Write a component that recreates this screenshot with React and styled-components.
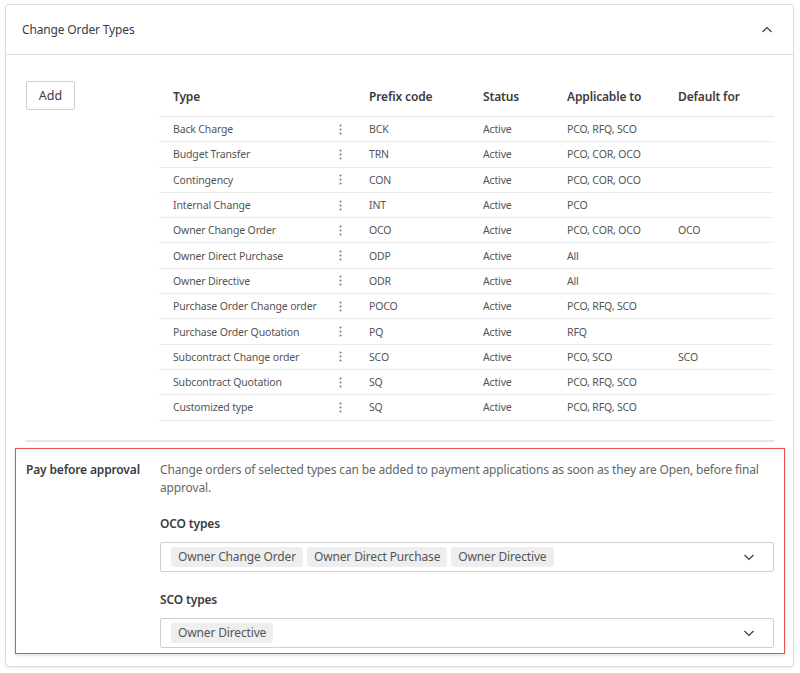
import styled, { createGlobalStyle } from "styled-components";

const GlobalStyle = createGlobalStyle`
  html, body {
    margin: 0;
    padding: 0;
    background: #ffffff;
    font-family: "Noto Sans", "Open Sans", Arial, sans-serif;
    color: #3c3c3c;
    letter-spacing: -0.15px;
  }
`;

const Page = styled.div`
  padding: 4px 6px 6px 5px;
`;

const Card = styled.div`
  width: 787px;
  height: 661px;
  border: 1px solid #dcdcdc;
  border-radius: 4px;
  box-shadow: 0 1px 2px rgba(0, 0, 0, 0.08);
  background: #fff;
  display: flex;
  flex-direction: column;
`;

const CardHeader = styled.div`
  height: 49px;
  border-bottom: 1px solid #dcdcdc;
  display: flex;
  align-items: center;
  justify-content: space-between;
  padding: 0 20px 0 16px;
  font-size: 12px;
  color: #3c3c3c;
`;

const CardBody = styled.div`
  padding: 22px 19px 0 9px;
  display: flex;
  flex-direction: column;
`;

const TopArea = styled.div`
  display: flex;
  padding-left: 11px;
`;

const AddColumn = styled.div`
  width: 135px;
  padding-top: 4px;
`;

const AddButton = styled.button`
  width: 49px;
  height: 29px;
  border: 1px solid #cfcfcf;
  border-radius: 2px;
  background: #fff;
  font-family: inherit;
  font-size: 12.5px;
  color: #3c3c3c;
  padding: 0;
`;

const Table = styled.div`
  width: 615px;
  display: grid;
  grid-template-columns: 167px 29px 114px 84px 111px 110px;
`;

const HeadCell = styled.div`
  height: 39px;
  border-bottom: 1px solid #e4e4e4;
  display: flex;
  align-items: center;
  padding-left: ${(p) => (p.$pad ? "14px" : "0")};
  font-size: 12px;
  font-weight: 600;
  color: #3c3c3c;
`;

const Cell = styled.div`
  height: 24.3px;
  border-bottom: 1px solid #ececec;
  display: flex;
  align-items: center;
  justify-content: ${(p) => (p.$center ? "center" : "flex-start")};
  padding-left: ${(p) => (p.$center ? "0" : "14px")};
  font-size: 10.5px;
  color: #555;
  white-space: nowrap;
`;

const Divider = styled.div`
  margin: 19px 0 0 10px;
  height: 2px;
  background: #e6e6e6;
`;

const Highlight = styled.div`
  margin-top: 6px;
  width: 770px;
  height: 206px;
  border: 1px solid #e8524f;
  box-shadow: 0 1px 3px rgba(0, 0, 0, 0.15);
  display: flex;
  padding: 12px 0 0 10px;
  box-sizing: border-box;
`;

const SettingLabel = styled.div`
  width: 134px;
  flex-shrink: 0;
  font-size: 12px;
  font-weight: 600;
  color: #3c3c3c;
  line-height: 18px;
`;

const SettingContent = styled.div`
  width: 614px;
  display: flex;
  flex-direction: column;
`;

const Description = styled.div`
  font-size: 12px;
  line-height: 18px;
  color: #666;
`;

const FieldLabel = styled.div`
  margin-top: ${(p) => p.$top}px;
  font-size: 12px;
  font-weight: 600;
  color: #3c3c3c;
  line-height: 18px;
`;

const Select = styled.div`
  margin-top: 9px;
  height: 30px;
  border: 1px solid #cfcfcf;
  border-radius: 2px;
  box-sizing: border-box;
  display: flex;
  align-items: center;
  padding: 0 18px 0 10px;
  gap: 4px;
`;

const Chip = styled.span`
  height: 20px;
  display: inline-flex;
  align-items: center;
  padding: 0 7px;
  background: #eeeeee;
  border-radius: 3px;
  font-size: 12px;
  color: #555;
`;

const Chevron = styled.svg`
  margin-left: auto;
  width: 12px;
  height: 12px;
`;

const rows = [
  ["Back Charge", "BCK", "Active", "PCO, RFQ, SCO", ""],
  ["Budget Transfer", "TRN", "Active", "PCO, COR, OCO", ""],
  ["Contingency", "CON", "Active", "PCO, COR, OCO", ""],
  ["Internal Change", "INT", "Active", "PCO", ""],
  ["Owner Change Order", "OCO", "Active", "PCO, COR, OCO", "OCO"],
  ["Owner Direct Purchase", "ODP", "Active", "All", ""],
  ["Owner Directive", "ODR", "Active", "All", ""],
  ["Purchase Order Change order", "POCO", "Active", "PCO, RFQ, SCO", ""],
  ["Purchase Order Quotation", "PQ", "Active", "RFQ", ""],
  ["Subcontract Change order", "SCO", "Active", "PCO, SCO", "SCO"],
  ["Subcontract Quotation", "SQ", "Active", "PCO, RFQ, SCO", ""],
  ["Customized type", "SQ", "Active", "PCO, RFQ, SCO", ""],
];

function Dots() {
  return (
    <svg width="3" height="11" viewBox="0 0 3 11">
      <circle cx="1.5" cy="1.5" r="1" fill="#777" />
      <circle cx="1.5" cy="5.5" r="1" fill="#777" />
      <circle cx="1.5" cy="9.5" r="1" fill="#777" />
    </svg>
  );
}

function ChevronIcon({ up }) {
  return (
    <Chevron viewBox="0 0 12 12">
      <path
        d={up ? "M1.5 8 L6 3.5 L10.5 8" : "M1.5 4 L6 8.5 L10.5 4"}
        fill="none"
        stroke="#3c3c3c"
        strokeWidth="1.2"
      />
    </Chevron>
  );
}

export default function App() {
  return (
    <Page>
      <GlobalStyle />
      <Card>
        <CardHeader>
          <span>Change Order Types</span>
          <ChevronIcon up />
        </CardHeader>
        <CardBody>
          <TopArea>
            <AddColumn>
              <AddButton>Add</AddButton>
            </AddColumn>
            <Table>
              <HeadCell $pad>Type</HeadCell>
              <HeadCell />
              <HeadCell $pad>Prefix code</HeadCell>
              <HeadCell $pad>Status</HeadCell>
              <HeadCell $pad>Applicable to</HeadCell>
              <HeadCell $pad>Default for</HeadCell>
              {rows.map((r) => [
                <Cell key={r[0] + "t"}>{r[0]}</Cell>,
                <Cell key={r[0] + "d"} $center>
                  <Dots />
                </Cell>,
                <Cell key={r[0] + "p"}>{r[1]}</Cell>,
                <Cell key={r[0] + "s"}>{r[2]}</Cell>,
                <Cell key={r[0] + "a"}>{r[3]}</Cell>,
                <Cell key={r[0] + "f"}>{r[4]}</Cell>,
              ])}
            </Table>
          </TopArea>
          <Divider />
          <Highlight>
            <SettingLabel>Pay before approval</SettingLabel>
            <SettingContent>
              <Description>
                Change orders of selected types can be added to payment
                applications as soon as they are Open, before final approval.
              </Description>
              <FieldLabel $top={18}>OCO types</FieldLabel>
              <Select>
                <Chip>Owner Change Order</Chip>
                <Chip>Owner Direct Purchase</Chip>
                <Chip>Owner Directive</Chip>
                <ChevronIcon />
              </Select>
              <FieldLabel $top={19}>SCO types</FieldLabel>
              <Select>
                <Chip>Owner Directive</Chip>
                <ChevronIcon />
              </Select>
            </SettingContent>
          </Highlight>
        </CardBody>
      </Card>
    </Page>
  );
}
